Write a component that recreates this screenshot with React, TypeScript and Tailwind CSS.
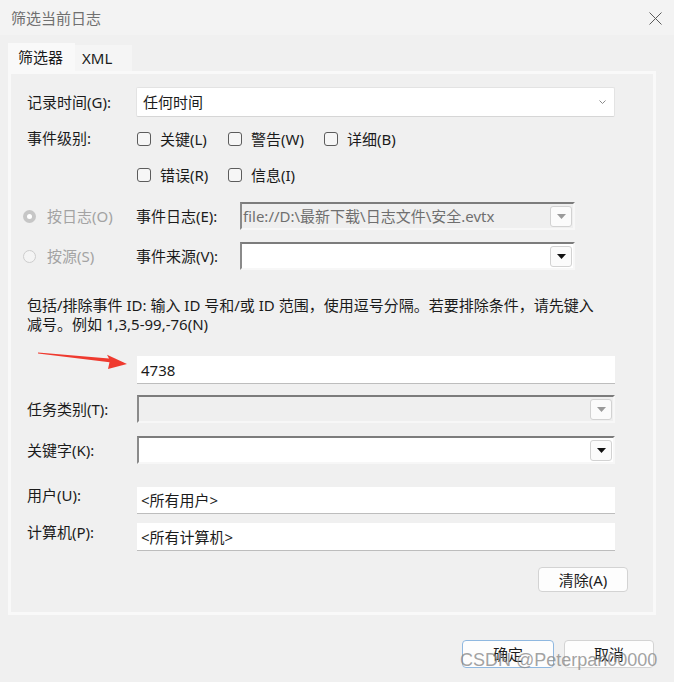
import type { ReactNode } from 'react';

const font = "font-['Noto_Sans','Noto_Sans_CJK_SC',sans-serif]";

function Checkbox({ label, width }: { label: string; width: string }) {
  return (
    <div className={`flex items-center gap-[9px] ${width}`}>
      <span className="w-[14px] h-[14px] rounded-[3px] border border-[#5c5c5c] bg-[#f6f6f6] shrink-0" />
      <span>{label}</span>
    </div>
  );
}

function Radio({ label, checked }: { label: string; checked?: boolean }) {
  return (
    <div className="flex items-center gap-[11px] w-[113px] text-[#a3a3a3]">
      {checked ? (
        <span className="w-[13px] h-[13px] rounded-full bg-[#c6c6c6] flex items-center justify-center shrink-0">
          <span className="w-[5px] h-[5px] rounded-full bg-white" />
        </span>
      ) : (
        <span className="w-[13px] h-[13px] rounded-full border border-[#cdcdcd] bg-[#f4f4f4] shrink-0" />
      )}
      <span>{label}</span>
    </div>
  );
}

function DropButton({ disabled }: { disabled?: boolean }) {
  return (
    <span className="w-[22px] h-[21px] mr-[1px] rounded-[3px] border border-[#d2d2d2] bg-[#fbfbfb] flex items-center justify-center shrink-0">
      <svg width="9" height="5" viewBox="0 0 9 5">
        <polygon points="0,0 9,0 4.5,5" fill={disabled ? '#9a9a9a' : '#111'} />
      </svg>
    </span>
  );
}

// sunken win32 style combo box
function ClassicCombo({ width, disabled, children }: { width: string; disabled?: boolean; children?: ReactNode }) {
  return (
    <div
      className={`${width} h-[28px] flex items-center border-2 border-t-[#7c7c7c] border-l-[#8a8a8a] border-b-[#f7f7f7] border-r-[#f7f7f7] ${
        disabled ? 'bg-[#efefef]' : 'bg-white'
      }`}
    >
      <div className="flex-1 pl-[1px] text-[#6f6f6f] whitespace-nowrap overflow-hidden">{children}</div>
      <DropButton disabled={disabled} />
    </div>
  );
}

function TextBox({ value, height = 'h-[28px]' }: { value?: string; height?: string }) {
  return (
    <div className={`w-[478px] ${height} bg-white border-b border-[#bdbdbd] flex items-center pl-[4px] text-[#1b1b1b]`}>
      {value}
    </div>
  );
}

function Row({ label, children, className = '' }: { label: string; children: ReactNode; className?: string }) {
  return (
    <div className={`flex items-center ${className}`}>
      <div className="w-[110px]">{label}</div>
      {children}
    </div>
  );
}

export default function App() {
  return (
    <div className={`relative w-[674px] h-[682px] overflow-hidden bg-[#f0f0f0] text-[15px] leading-[20px] text-[#1b1b1b] ${font}`}>
      {/* Title bar */}
      <div className="h-[35px] bg-[#f3f3f3] flex items-center justify-between pl-[11px] pr-[12px]">
        <span className="text-[#707070]">筛选当前日志</span>
        <svg width="13" height="13" viewBox="0 0 13 13" className="mt-[1px]">
          <path d="M0.5 0.5 L12.5 12.5 M12.5 0.5 L0.5 12.5" stroke="#5a5a5a" strokeWidth="1" />
        </svg>
      </div>

      {/* Tabs */}
      <div className="mt-[8px] ml-[8px] flex items-end h-[28px]">
        <div className="h-[28px] w-[67px] bg-[#f9f9f9] flex items-center pl-[10px] text-[#1b1b1b]">筛选器</div>
        <div className="h-[26px] w-[57px] bg-[#f5f5f5] flex items-center pl-[7px]">XML</div>
      </div>

      {/* Filter panel */}
      <div className="ml-[8px] w-[648px] h-[544px] border-[3px] border-[#f9f9f9] bg-[#f0f0f0] pl-[16px]">
        <Row label="记录时间(G):" className="mt-[13px] h-[30px]">
          <div className="w-[479px] h-[30px] -ml-[1px] bg-white border border-[#e3e3e3] border-b-[#d6d6d6] rounded-[2px] flex items-center justify-between pl-[6px] pr-[8px]">
            <span>任何时间</span>
            <svg width="7" height="4" viewBox="0 0 7 4">
              <polyline points="0.5,0.5 3.5,3.5 6.5,0.5" fill="none" stroke="#8a8a8a" strokeWidth="1" />
            </svg>
          </div>
        </Row>

        <div className="mt-[4px] flex">
          <div className="w-[110px] pt-[7px]">事件级别:</div>
          <div className="flex flex-col">
            <div className="h-[36px] flex items-center">
              <Checkbox label="关键(L)" width="w-[91px]" />
              <Checkbox label="警告(W)" width="w-[96px]" />
              <Checkbox label="详细(B)" width="w-[100px]" />
            </div>
            <div className="h-[36px] flex items-center">
              <Checkbox label="错误(R)" width="w-[91px]" />
              <Checkbox label="信息(I)" width="w-[96px]" />
            </div>
          </div>
        </div>

        <div className="mt-[9px] h-[28px] flex items-center -ml-[4px]">
          <Radio label="按日志(O)" checked />
          <div className="w-[104px]">事件日志(E):</div>
          <ClassicCombo width="w-[335px]" disabled>
            file://D:\最新下载\日志文件\安全.evtx
          </ClassicCombo>
        </div>

        <div className="mt-[12px] h-[28px] flex items-center -ml-[4px]">
          <Radio label="按源(S)" />
          <div className="w-[104px]">事件来源(V):</div>
          <ClassicCombo width="w-[335px]" />
        </div>

        <div className="mt-[26px] leading-[19px] whitespace-nowrap">
          <div>包括/排除事件 ID: 输入 ID 号和/或 ID 范围，使用逗号分隔。若要排除条件，请先键入</div>
          <div>减号。例如 1,3,5-99,-76(N)</div>
        </div>

        <div className="mt-[22px] flex">
          <div className="w-[110px]" />
          <TextBox value="4738" />
        </div>

        <Row label="任务类别(T):" className="mt-[11px]">
          <ClassicCombo width="w-[478px]" disabled />
        </Row>

        <Row label="关键字(K):" className="mt-[13px]">
          <ClassicCombo width="w-[478px]" />
        </Row>

        <div className="mt-[23px] flex">
          <div className="w-[110px] -mt-[2px]">用户(U):</div>
          <TextBox value="<所有用户>" height="h-[27px]" />
        </div>

        <div className="mt-[9px] flex">
          <div className="w-[110px] -mt-[1px]">计算机(P):</div>
          <TextBox value="<所有计算机>" />
        </div>

        <div className="mt-[16px] flex justify-end pr-[25px]">
          <button className="w-[90px] h-[25px] rounded-[4px] border border-[#d3d3d3] bg-[#fdfdfd] text-[15px] leading-[20px]">
            清除(A)
          </button>
        </div>
      </div>

      {/* Dialog buttons */}
      <div className="mt-[25px] flex justify-end gap-[10px] pr-[20px]">
        <button className="w-[92px] h-[28px] rounded-[4px] border border-[#8fb8e0] bg-[#fdfdfd] leading-[20px]">确定</button>
        <button className="w-[90px] h-[28px] rounded-[4px] border border-[#d3d3d3] bg-[#fdfdfd] leading-[20px]">取消</button>
      </div>

      {/* Annotation arrow */}
      <svg className="absolute left-0 top-0 pointer-events-none" width="674" height="682">
        <polygon points="38,352.4 109,358.6 107,354.8 127,364 108,369 109.5,362.2 38,353.6" fill="#ef3a2f" />
      </svg>

      {/* Watermark */}
      <div className="absolute left-[460px] top-[649px] text-[18px] leading-[22px] text-[#8a8a8a]/80 font-['Liberation_Sans',sans-serif] whitespace-nowrap pointer-events-none">
        CSDN @Peterpan00000
      </div>
    </div>
  );
}
